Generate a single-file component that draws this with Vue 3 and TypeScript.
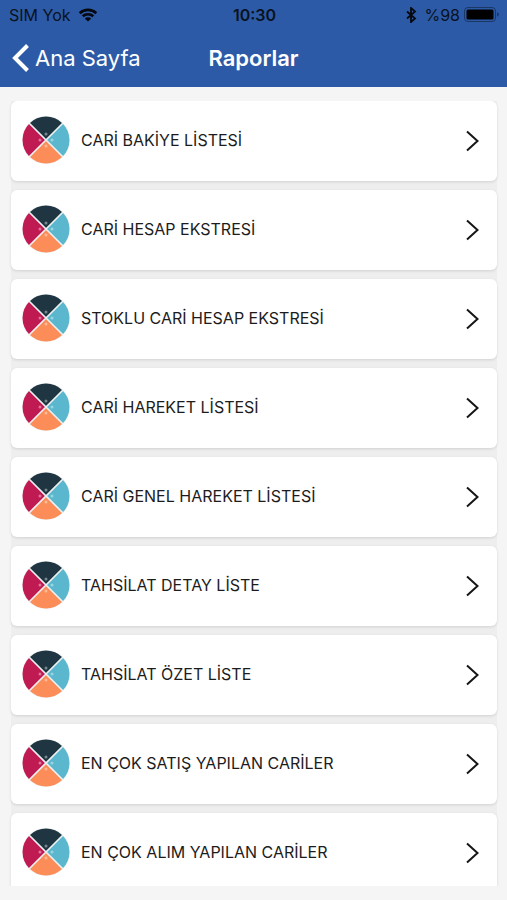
<script setup lang="ts">
interface Report {
  id: number
  title: string
}

const reports: Report[] = [
  'CARİ BAKİYE LİSTESİ',
  'CARİ HESAP EKSTRESİ',
  'STOKLU CARİ HESAP EKSTRESİ',
  'CARİ HAREKET LİSTESİ',
  'CARİ GENEL HAREKET LİSTESİ',
  'TAHSİLAT DETAY LİSTE',
  'TAHSİLAT ÖZET LİSTE',
  'EN ÇOK SATIŞ YAPILAN CARİLER',
  'EN ÇOK ALIM YAPILAN CARİLER',
].map((title, index) => ({ id: index + 1, title }))
</script>

<template>
  <div class="screen">
    <header class="top">
      <div class="status">
        <div class="status-side">
          <span>SIM Yok</span>
          <svg class="wifi" width="20" height="14" viewBox="0 0 20 14" aria-hidden="true">
            <path d="M1.7 5.2a12 12 0 0 1 16.6 0" />
            <path d="M4.7 8.3a7.7 7.7 0 0 1 10.6 0" />
            <path class="solid" d="M10 13.6L6.8 10.5a4.6 4.6 0 0 1 6.4 0z" />
          </svg>
        </div>
        <span class="clock">10:30</span>
        <div class="status-side end">
          <svg class="bluetooth" width="14" height="16" viewBox="0 0 14 16" aria-hidden="true">
            <path d="M1 4.5l8 7L5 15V1l4 3.5-8 7" />
          </svg>
          <span>%98</span>
          <svg width="36" height="16" viewBox="0 0 36 16" aria-hidden="true">
            <rect class="shell" x="0.5" y="0.5" width="31" height="14" rx="3.5" />
            <rect x="2.5" y="2.5" width="27" height="10" rx="1.5" />
            <path class="cap" d="M33 5.2q2 .7 2 2.3t-2 2.3z" />
          </svg>
        </div>
      </div>
      <nav class="bar">
        <a class="back" href="#">
          <svg width="18" height="30" viewBox="0 0 18 30" aria-hidden="true">
            <path d="M15.5 2.5L3 15l12.5 12.5" />
          </svg>
          <span>Ana Sayfa</span>
        </a>
        <h1>Raporlar</h1>
      </nav>
    </header>

    <main class="content">
      <ul class="list">
        <li v-for="report in reports" :key="report.id">
          <button class="card" type="button">
            <svg class="pie" width="48" height="48" viewBox="0 0 48 48" aria-hidden="true">
              <circle cx="24" cy="24" r="24" fill="#eef1f2" />
              <path d="M24 24L7.4 7.4a23.5 23.5 0 0 1 33.2 0z" fill="#1f3642" />
              <path d="M24 24L40.6 7.4a23.5 23.5 0 0 1 0 33.2z" fill="#5ab7cd" />
              <path d="M24 24l16.6 16.6a23.5 23.5 0 0 1-33.2 0z" fill="#fc8d58" />
              <path d="M24 24L7.4 40.6a23.5 23.5 0 0 1 0-33.2z" fill="#c01a53" />
              <path d="M7 7l34 34M41 7L7 41" stroke="#eef1f2" stroke-width="1.7" />
              <g fill="#ffffff" fill-opacity="0.4">
                <circle cx="24" cy="18" r="1.5" />
                <circle cx="30" cy="24" r="1.5" />
                <circle cx="24" cy="30" r="1.5" />
                <circle cx="18" cy="24" r="1.5" />
              </g>
            </svg>
            <span class="title">{{ report.title }}</span>
            <svg class="chevron" width="14" height="24" viewBox="0 0 14 24" aria-hidden="true">
              <path d="M2 3.5L12.5 13 2 22.5" />
            </svg>
          </button>
        </li>
      </ul>
    </main>
  </div>
</template>

<style>
body {
  margin: 0;
  background: #f5f5f5;
}
</style>

<style scoped>
.screen {
  display: flex;
  flex-direction: column;
  height: 100vh;
  background: #f5f5f5;
  color: #1c1c1c;
  font-family: Inter, "Liberation Sans", sans-serif;
}

.top {
  flex: none;
  background: #2d5aa6;
}

.status {
  display: grid;
  grid-template-columns: 1fr auto 1fr;
  align-items: center;
  height: 30px;
  padding: 0 7px 0 9px;
  color: #0a1220;
  font-size: 16px;
  line-height: 20px;
}

.status-side {
  display: flex;
  align-items: center;
  gap: 7px;
}

.end {
  justify-content: flex-end;
  gap: 4px;
}

.clock {
  font-weight: 600;
}

.wifi,
.bluetooth {
  fill: none;
  stroke: #05080f;
  stroke-width: 2.6;
}

.wifi .solid {
  fill: #05080f;
  stroke: none;
}

.bluetooth {
  stroke-width: 1.8;
}

.shell {
  fill: none;
  stroke: #1b3765;
}

.cap {
  fill: #1b3765;
}

.bar {
  display: grid;
  grid-template-columns: 1fr auto 1fr;
  align-items: center;
  box-sizing: border-box;
  height: 57px;
  padding: 0 12px 2px;
  color: #ffffff;
  font-size: 22px;
  line-height: 28px;
}

.back {
  display: flex;
  align-items: center;
  gap: 5px;
  color: inherit;
  text-decoration: none;
}

.back path {
  fill: none;
  stroke: #ffffff;
  stroke-width: 4;
}

h1 {
  margin: 0;
  font-size: 22px;
  font-weight: 600;
}

.content {
  flex: 1;
  min-height: 0;
  margin: 14px 0;
  padding: 0 10px 0 11px;
  overflow-y: auto;
  scrollbar-width: none;
}

.list {
  display: flex;
  flex-direction: column;
  gap: 9px;
  margin: 0;
  padding: 0;
  list-style: none;
  background: #eeeeee;
}

.card {
  display: flex;
  align-items: center;
  gap: 11px;
  box-sizing: border-box;
  width: 100%;
  height: 80px;
  padding: 0 18px 2px 11px;
  border: 0;
  border-radius: 6px;
  background: #ffffff;
  box-shadow: 0 1px 3px rgba(0, 0, 0, 0.12);
  color: inherit;
  font: inherit;
  font-size: 16px;
  line-height: 20px;
  text-align: left;
  cursor: pointer;
}

.pie,
.chevron {
  flex: none;
}

.title {
  flex: 1;
}

.chevron path {
  fill: none;
  stroke: #161616;
  stroke-width: 2;
}
</style>
